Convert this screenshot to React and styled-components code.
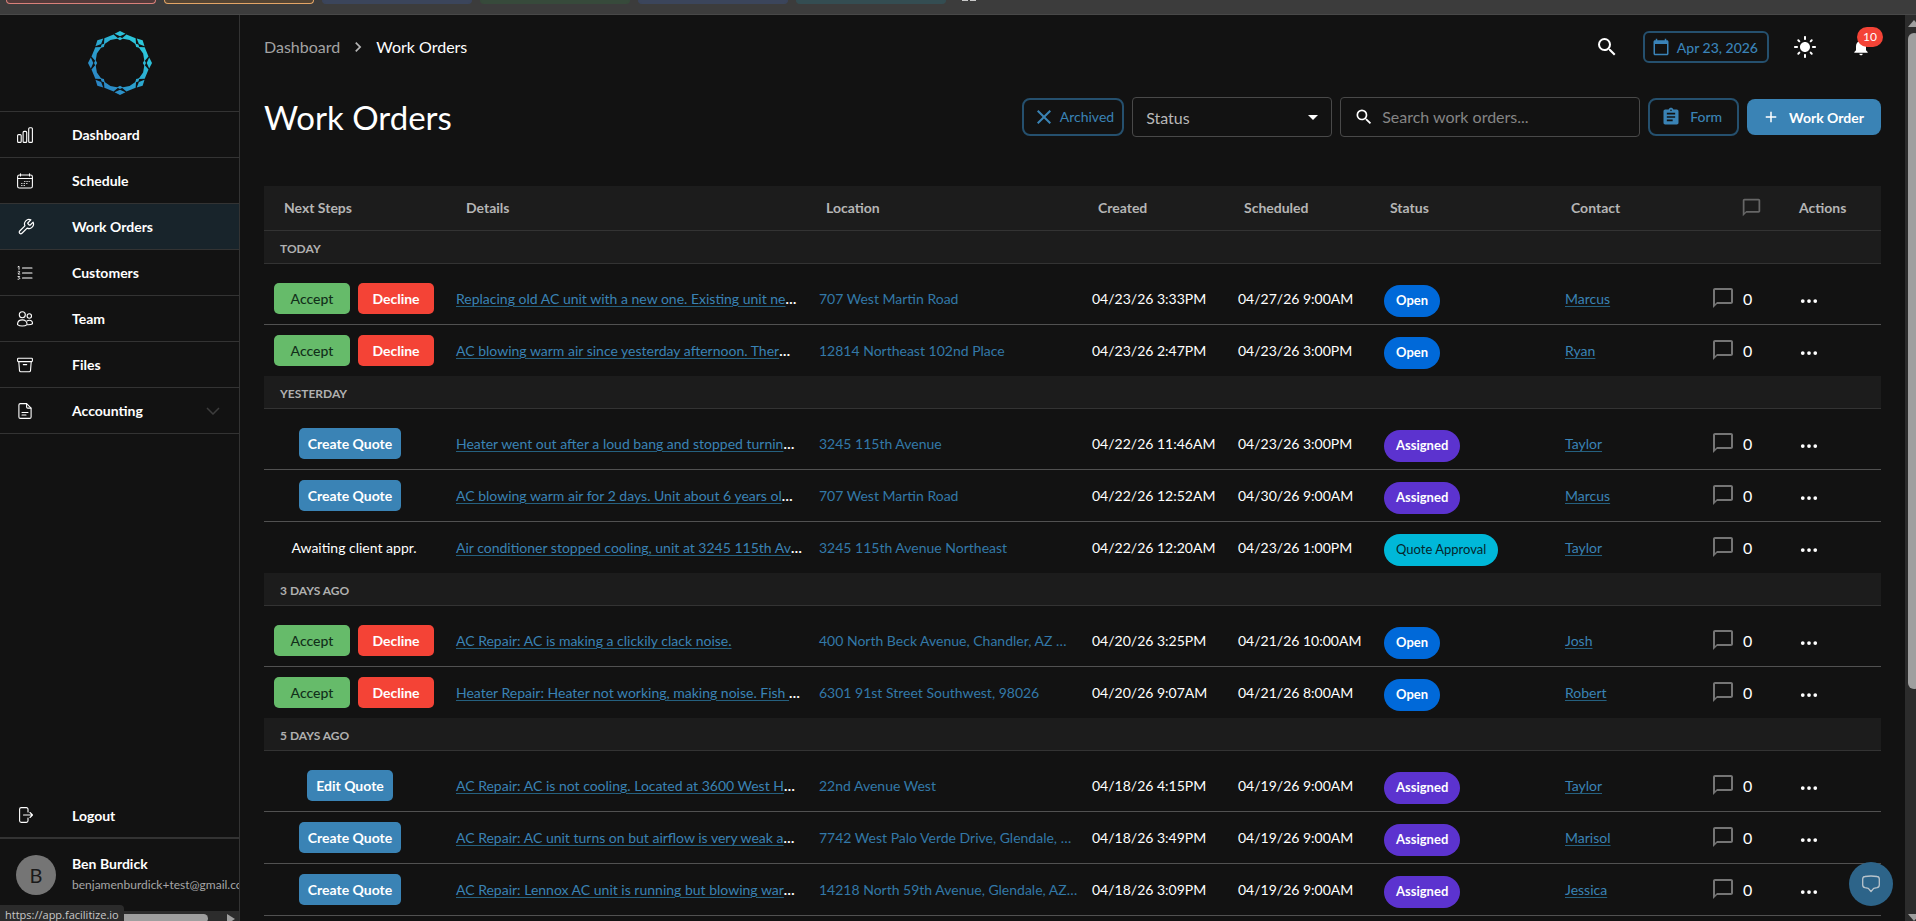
import React from "react";
import styled, { createGlobalStyle } from "styled-components";
import {
  MdSearch,
  MdLightMode,
  MdNotifications,
  MdCalendarToday,
  MdAssignment,
  MdAdd,
  MdClose,
  MdChevronRight,
  MdArrowDropDown,
  MdOutlineChatBubbleOutline,
} from "react-icons/md";
import { BsThreeDots } from "react-icons/bs";
import { LuWrench } from "react-icons/lu";

// Icons

const LineIcon = ({ children, size = 16 }) => (
  <svg
    width={size}
    height={size}
    viewBox="0 0 16 16"
    fill="none"
    stroke="currentColor"
    strokeWidth="1.1"
    strokeLinecap="round"
    strokeLinejoin="round"
    aria-hidden="true"
  >
    {children}
  </svg>
);

const BarsIcon = () => (
  <LineIcon>
    <rect x="0.6" y="7.6" width="3.6" height="7.8" rx="1" />
    <rect x="6.1" y="4.4" width="3.6" height="11" rx="1" />
    <rect x="11.7" y="0.8" width="3.7" height="14.6" rx="1" />
  </LineIcon>
);

const CalendarIcon = () => (
  <LineIcon>
    <rect x="0.6" y="2" width="14.8" height="13" rx="1.8" />
    <path d="M0.8 5.5h14.4M3.5 0.8V3M12.5 0.8V3" />
    <path
      strokeWidth="0.8"
      d="M7.500 8.5h.6M9.800 8.5h.6M12 8.5h.4M4.500 10.500h.6M7 10.500h.6M9.500 10.500h.6M4.500 12.500h.6M7 12.500h.6"
    />
  </LineIcon>
);

const ListIcon = () => (
  <LineIcon>
    <path d="M5.500 3h9.500M5.500 8h9.500M5.500 13h9.500" />
    <path
      strokeWidth="0.9"
      d="M1 1.800L2 1.200V4.300M1 6.600c.4-.5 1.700-.5 1.700.3 0 .7-1.700 1.400-1.700 2.100h1.800M1 11.500h1.600L1.800 12.700c1.400 0 1.300 1.900-.8 1.600"
    />
  </LineIcon>
);

const TeamIcon = () => (
  <LineIcon>
    <circle cx="5.3" cy="3.7" r="3" />
    <circle cx="12.3" cy="5" r="2.2" />
    <path d="M.5 13.6c0-3 2-4.7 4.8-4.7s4.8 1.7 4.8 4.7c-1.200.9-3 1.400-4.800 1.400s-3.600-.5-4.800-1.400z" />
    <path d="M10 9.900c.7-.4 1.500-.6 2.300-.6 1.900 0 3.200 1.200 3.200 3.400-.9.700-2.600 1.100-4.800 1" />
  </LineIcon>
);

const FilesIcon = () => (
  <LineIcon>
    <rect x="0.6" y="1.200" width="14.8" height="3.400" rx="0.8" />
    <path d="M1.800 4.800l.7 8.800c.1.700.6 1.200 1.300 1.200h8.400c.7 0 1.200-.5 1.300-1.200l.7-8.800M6.300 7.600h3.400" />
  </LineIcon>
);

const DocumentIcon = () => (
  <LineIcon>
    <path d="M9.600.6H3.400C2.500.6 1.900 1.200 1.900 2v12c0 .8.600 1.400 1.500 1.400h9.200c.8 0 1.500-.6 1.500-1.400V5.100z" />
    <path d="M9.600.8v3.200c0 .6.500 1.100 1.100 1.100h3.200M5 9.500h6M5 12h4" />
  </LineIcon>
);

const LogoutIcon = () => (
  <LineIcon>
    <path d="M11 5V2.200C11 1.300 10.300.6 9.400.6H4.200c-.9 0-1.600.7-1.600 1.600v11.600c0 .9.700 1.600 1.600 1.600h5.200c.9 0 1.600-.7 1.600-1.600V11" />
    <path d="M6.500 8h9M13 5.500L15.500 8 13 10.500" />
  </LineIcon>
);

const ChatIcon = () => (
  <svg
    width="20"
    height="20"
    viewBox="0 0 20 20"
    fill="none"
    stroke="currentColor"
    strokeWidth="1.300"
    strokeLinejoin="round"
    aria-hidden="true"
  >
    <path d="M4 2.500Q10 1.500 16 2.500Q18.300 2.800 18.300 5V11Q18.300 13.200 16 13.700L12.700 14.300L10 17.500L7.300 14.300L4 13.700Q1.700 13.200 1.700 11V5Q1.700 2.800 4 2.500Z" />
  </svg>
);

const Logo = () => {
  const angles = [0, 45, 90, 135, 180, 225, 270, 315];
  return (
    <svg width="64" height="64" viewBox="-32 -32 64 64" aria-label="Facilitize">
      <defs>
        <linearGradient
          id="ring"
          gradientUnits="userSpaceOnUse"
          x1="-22"
          y1="22"
          x2="22"
          y2="-22"
        >
          <stop offset="0" stopColor="#2b84c4" />
          <stop offset="1" stopColor="#2ccbdc" />
        </linearGradient>
        <mask
          id="gems"
          maskUnits="userSpaceOnUse"
          x="-32"
          y="-32"
          width="64"
          height="64"
        >
          {angles.map((a) => (
            <g key={a} transform={`rotate(${a})`} fill="#fff">
              <path d="M0-32L5.500-29.200L0-26.700L-5.500-29.200Z" />
              <path d="M0-26L3-24.500L0-22.800L-3-24.500Z" />
              <path
                transform="rotate(22.5)"
                d="M-7.800-23.200L-5-28.800L5-28.800L7.800-23.200L0-25Z"
              />
            </g>
          ))}
        </mask>
      </defs>
      <rect x="-32" y="-32" width="64" height="64" fill="url(#ring)" mask="url(#gems)" />
    </svg>
  );
};

// Data

const navItems = [
  { label: "Dashboard", icon: <BarsIcon /> },
  { label: "Schedule", icon: <CalendarIcon /> },
  { label: "Work Orders", icon: <LuWrench size={18} strokeWidth={1.6} />, active: true },
  { label: "Customers", icon: <ListIcon /> },
  { label: "Team", icon: <TeamIcon /> },
  { label: "Files", icon: <FilesIcon /> },
  { label: "Accounting", icon: <DocumentIcon />, expandable: true },
];

const groups = [
  {
    title: "Today",
    orders: [
      {
        step: "respond",
        details: "Replacing old AC unit with a new one. Existing unit ne",
        cut: true,
        location: "707 West Martin Road",
        created: "04/23/26 3:33PM",
        scheduled: "04/27/26 9:00AM",
        status: "Open",
        contact: "Marcus",
      },
      {
        step: "respond",
        details: "AC blowing warm air since yesterday afternoon. Ther",
        cut: true,
        location: "12814 Northeast 102nd Place",
        created: "04/23/26 2:47PM",
        scheduled: "04/23/26 3:00PM",
        status: "Open",
        contact: "Ryan",
      },
    ],
  },
  {
    title: "Yesterday",
    orders: [
      {
        step: "create",
        details: "Heater went out after a loud bang and stopped turnin",
        cut: true,
        location: "3245 115th Avenue",
        created: "04/22/26 11:46AM",
        scheduled: "04/23/26 3:00PM",
        status: "Assigned",
        contact: "Taylor",
      },
      {
        step: "create",
        details: "AC blowing warm air for 2 days. Unit about 6 years ol",
        cut: true,
        location: "707 West Martin Road",
        created: "04/22/26 12:52AM",
        scheduled: "04/30/26 9:00AM",
        status: "Assigned",
        contact: "Marcus",
      },
      {
        step: "awaiting",
        details: "Air conditioner stopped cooling, unit at 3245 115th Av",
        cut: true,
        location: "3245 115th Avenue Northeast",
        created: "04/22/26 12:20AM",
        scheduled: "04/23/26 1:00PM",
        status: "Quote Approval",
        contact: "Taylor",
      },
    ],
  },
  {
    title: "3 days ago",
    orders: [
      {
        step: "respond",
        details: "AC Repair: AC is making a clickily clack noise.",
        location: "400 North Beck Avenue, Chandler, AZ …",
        created: "04/20/26 3:25PM",
        scheduled: "04/21/26 10:00AM",
        status: "Open",
        contact: "Josh",
      },
      {
        step: "respond",
        details: "Heater Repair: Heater not working, making noise. Fish ",
        cut: true,
        location: "6301 91st Street Southwest, 98026",
        created: "04/20/26 9:07AM",
        scheduled: "04/21/26 8:00AM",
        status: "Open",
        contact: "Robert",
      },
    ],
  },
  {
    title: "5 days ago",
    orders: [
      {
        step: "edit",
        details: "AC Repair: AC is not cooling. Located at 3600 West H",
        cut: true,
        location: "22nd Avenue West",
        created: "04/18/26 4:15PM",
        scheduled: "04/19/26 9:00AM",
        status: "Assigned",
        contact: "Taylor",
      },
      {
        step: "create",
        details: "AC Repair: AC unit turns on but airflow is very weak a",
        cut: true,
        location: "7742 West Palo Verde Drive, Glendale, …",
        created: "04/18/26 3:49PM",
        scheduled: "04/19/26 9:00AM",
        status: "Assigned",
        contact: "Marisol",
      },
      {
        step: "create",
        details: "AC Repair: Lennox AC unit is running but blowing war",
        cut: true,
        location: "14218 North 59th Avenue, Glendale, AZ…",
        created: "04/18/26 3:09PM",
        scheduled: "04/19/26 9:00AM",
        status: "Assigned",
        contact: "Jessica",
      },
    ],
  },
];

const statusColors = {
  Open: { bg: "#0069d9", fg: "#fff" },
  Assigned: { bg: "#5c33cf", fg: "#fff" },
  "Quote Approval": { bg: "#00b8d9", fg: "#06262c" },
};

const tabs = [
  { bg: "#533a3a", line: "#d9807a" },
  { bg: "#544433", line: "#e3a566" },
  { bg: "#3b455b" },
  { bg: "#374a3b" },
  { bg: "#3b455b" },
  { bg: "#344d52" },
];

// Components

const NextStep = ({ step }) => {
  if (step === "respond") {
    return (
      <StepGroup>
        <StepButton $color="accept">Accept</StepButton>
        <StepButton $color="decline">Decline</StepButton>
      </StepGroup>
    );
  }
  if (step === "awaiting") {
    return <StepText>Awaiting client appr.</StepText>;
  }
  return (
    <StepGroup $center>
      <StepButton>{step === "edit" ? "Edit Quote" : "Create Quote"}</StepButton>
    </StepGroup>
  );
};

const OrderRow = ({ order }) => (
  <tr>
    <Cell $pad={10}>
      <NextStep step={order.step} />
    </Cell>
    <Cell $pad={10}>
      <DetailLink href="#order">{order.details}</DetailLink>
      {order.cut && <Ellipsis>…</Ellipsis>}
    </Cell>
    <Cell $pad={8}>
      <Address>{order.location}</Address>
    </Cell>
    <Cell>{order.created}</Cell>
    <Cell>{order.scheduled}</Cell>
    <Cell>
      <Badge $status={order.status}>{order.status}</Badge>
    </Cell>
    <Cell>
      <DetailLink href="#contact">{order.contact}</DetailLink>
    </Cell>
    <Cell>
      <Comments>
        <MdOutlineChatBubbleOutline size={24} />
        <span>0</span>
      </Comments>
    </Cell>
    <Cell>
      <MoreButton aria-label="More actions">
        <BsThreeDots size={20} />
      </MoreButton>
    </Cell>
  </tr>
);

const Sidebar = () => (
  <SidebarContainer>
    <LogoBox>
      <Logo />
    </LogoBox>
    <Nav>
      {navItems.map((item) => (
        <NavItem key={item.label} href="#nav" $active={item.active}>
          <NavIcon>{item.icon}</NavIcon>
          <NavLabel>{item.label}</NavLabel>
          {item.expandable && (
            <Expand width="14" height="8" viewBox="0 0 14 8">
              <path d="M1 1l6 6 6-6" fill="none" stroke="currentColor" strokeWidth="1.500" />
            </Expand>
          )}
        </NavItem>
      ))}
    </Nav>
    <Logout>
      <NavIcon>
        <LogoutIcon />
      </NavIcon>
      <NavLabel>Logout</NavLabel>
    </Logout>
    <User>
      <Avatar>B</Avatar>
      <UserInfo>
        <UserName>Ben Burdick</UserName>
        <UserEmail>benjamenburdick+test@gmail.com</UserEmail>
      </UserInfo>
    </User>
    <SideScroll>
      <SideThumb />
      <svg width="8" height="10" viewBox="0 0 8 10">
        <path d="M0 0l8 5-8 5z" fill="#9f9f9f" />
      </svg>
    </SideScroll>
  </SidebarContainer>
);

const App = () => (
  <>
    <GlobalStyle />
    <Page>
      <TabStrip>
        {tabs.map((tab, i) => (
          <Tab key={i} $bg={tab.bg} $line={tab.line} />
        ))}
        <TabMark />
      </TabStrip>
      <Body>
        <Sidebar />
        <Main>
          <TopBar>
            <Breadcrumbs aria-label="Breadcrumb">
              <Crumb href="#dashboard">Dashboard</Crumb>
              <MdChevronRight size={20} color="#b5b5b5" />
              <Crumb href="#orders" $current>
                Work Orders
              </Crumb>
            </Breadcrumbs>
            <TopActions>
              <IconButton aria-label="Search">
                <MdSearch size={24} />
              </IconButton>
              <DateButton>
                <MdCalendarToday size={18} />
                Apr 23, 2026
              </DateButton>
              <IconButton aria-label="Toggle theme">
                <MdLightMode size={24} />
              </IconButton>
              <IconButton aria-label="Notifications">
                <MdNotifications size={20} />
                <Count>10</Count>
              </IconButton>
            </TopActions>
          </TopBar>
          <Toolbar>
            <Title>Work Orders</Title>
            <Filters>
              <OutlineButton $tight>
                <MdClose size={24} />
                Archived
              </OutlineButton>
              <SelectBox>
                <Select aria-label="Status" defaultValue="">
                  <option value="">Status</option>
                  <option>Open</option>
                  <option>Assigned</option>
                  <option>Quote Approval</option>
                </Select>
                <SelectArrow size={24} />
              </SelectBox>
              <SearchBox>
                <MdSearch size={20} />
                <SearchInput
                  type="text"
                  aria-label="Search work orders"
                  placeholder="Search work orders..."
                />
              </SearchBox>
              <OutlineButton>
                <MdAssignment size={20} />
                <ButtonText>Form</ButtonText>
              </OutlineButton>
              <PrimaryButton>
                <MdAdd size={18} />
                Work Order
              </PrimaryButton>
            </Filters>
          </Toolbar>
          <Table>
            <colgroup>
              <Col $w={182} />
              <Col $w={365} />
              <Col $w={277} />
              <Col $w={146} />
              <Col $w={146} />
              <Col $w={181} />
              <Col $w={148} />
              <Col $w={86} />
              <Col $w={86} />
            </colgroup>
            <thead>
              <tr>
                <HeadCell $pad={20}>Next Steps</HeadCell>
                <HeadCell $pad={20}>Details</HeadCell>
                <HeadCell $pad={15}>Location</HeadCell>
                <HeadCell>Created</HeadCell>
                <HeadCell>Scheduled</HeadCell>
                <HeadCell>Status</HeadCell>
                <HeadCell>Contact</HeadCell>
                <HeadCell $center aria-label="Comments">
                  <MdOutlineChatBubbleOutline size={21} color="#666" />
                </HeadCell>
                <HeadCell $pad={4}>Actions</HeadCell>
              </tr>
            </thead>
            {groups.map((group) => (
              <Group key={group.title}>
                <tr>
                  <GroupCell colSpan={9}>{group.title}</GroupCell>
                </tr>
                {group.orders.map((order) => (
                  <OrderRow key={order.created} order={order} />
                ))}
              </Group>
            ))}
          </Table>
        </Main>
        <PageScroll>
          <ScrollArrow viewBox="0 0 12 7">
            <path d="M0 7l6-7 6 7z" />
          </ScrollArrow>
          <PageThumb />
          <ScrollRest />
          <ScrollArrow viewBox="0 0 12 7">
            <path d="M0 0l6 7 6-7z" />
          </ScrollArrow>
        </PageScroll>
      </Body>
      <ChatButton aria-label="Open chat">
        <ChatIcon />
      </ChatButton>
      <StatusTip>https://app.facilitize.io</StatusTip>
    </Page>
  </>
);

export default App;

// Styles

const GlobalStyle = createGlobalStyle`
  * {
    box-sizing: border-box;
  }
  body {
    margin: 0;
    background: #121212;
    color: #fff;
    font-family: Lato, "Liberation Sans", sans-serif;
    font-size: 14px;
  }
  button, input, select {
    font-family: inherit;
  }
  svg {
    display: block;
    flex-shrink: 0;
  }
`;

const Page = styled.div`
  position: relative;
  height: 100vh;
  display: flex;
  flex-direction: column;
  overflow: hidden;
`;

const TabStrip = styled.div`
  flex: none;
  display: flex;
  gap: 8px;
  height: 15px;
  padding: 0 6px;
  background: #3c3c3c;
  border-bottom: 1px solid #484848;
`;

const Tab = styled.div`
  width: 150px;
  height: 4px;
  background: ${({ $bg }) => $bg};
  border: 1px solid ${({ $line, $bg }) => $line || $bg};
  border-top: none;
  border-radius: 0 0 5px 5px;
`;

const TabMark = styled.div`
  width: 14px;
  height: 1px;
  margin-left: 8px;
  border: solid #c9c9c9;
  border-width: 0 6px;
`;

const Body = styled.div`
  flex: 1;
  min-height: 0;
  display: flex;
`;

const SidebarContainer = styled.aside`
  flex: none;
  width: 240px;
  display: flex;
  flex-direction: column;
  border-right: 1px solid #333;
  overflow: hidden;
`;

const LogoBox = styled.div`
  display: flex;
  justify-content: center;
  padding: 16px 0;
  border-bottom: 1px solid #333;
`;

const Nav = styled.nav`
  flex: 1;
  display: flex;
  flex-direction: column;
`;

const NavItem = styled.a`
  display: flex;
  align-items: center;
  height: 46px;
  padding: 0 19px 0 17px;
  color: #fff;
  text-decoration: none;
  border-bottom: 1px solid #333;
  background: ${({ $active }) => ($active ? "#18242b" : "transparent")};
`;

const NavIcon = styled.span`
  width: 55px;
`;

const NavLabel = styled.span`
  flex: 1;
  text-align: left;
  font-size: 14px;
  font-weight: 700;
`;

const Expand = styled.svg`
  color: #3d3d3d;
`;

const Logout = styled.button`
  display: flex;
  align-items: center;
  height: 46px;
  padding: 0 17px;
  background: none;
  border: none;
  border-bottom: 2px solid #333;
  color: #fff;
`;

const User = styled.div`
  display: flex;
  align-items: center;
  gap: 16px;
  height: 72px;
  padding: 0 0 0 16px;
`;

const Avatar = styled.div`
  flex: none;
  display: flex;
  align-items: center;
  justify-content: center;
  width: 40px;
  height: 40px;
  border-radius: 50%;
  background: #757575;
  color: #1a1a1a;
  font-size: 20px;
`;

const UserInfo = styled.div`
  display: flex;
  flex-direction: column;
  gap: 4px;
  padding-bottom: 3px;
  white-space: nowrap;
`;

const UserName = styled.span`
  font-weight: 700;
  line-height: 18px;
`;

const UserEmail = styled.span`
  color: #a6a6a6;
  font-size: 12px;
  line-height: 16px;
`;

const SideScroll = styled.div`
  display: flex;
  gap: 19px;
  height: 10px;
  padding: 3px 4px 0 16px;
  background: #2c2c2c;
  overflow: hidden;
`;

const SideThumb = styled.div`
  flex: 1;
  height: 9px;
  border-radius: 5px;
  background: #9f9f9f;
`;

const Main = styled.main`
  flex: 1;
  min-width: 0;
  padding: 16px 24px 0;
  overflow: hidden;
`;

const TopBar = styled.header`
  display: flex;
  align-items: center;
  justify-content: space-between;
  height: 32px;
`;

const Breadcrumbs = styled.nav`
  display: flex;
  align-items: center;
  gap: 8px;
`;

const Crumb = styled.a`
  padding-bottom: 2px;
  font-size: 16px;
  text-decoration: none;
  color: ${({ $current }) => ($current ? "#fff" : "#a3a3a3")};
`;

const TopActions = styled.div`
  display: flex;
  align-items: center;
  gap: 16px;
`;

const IconButton = styled.button`
  position: relative;
  display: flex;
  align-items: center;
  justify-content: center;
  width: 40px;
  height: 40px;
  padding: 0;
  background: none;
  border: none;
  color: #fff;
`;

const Count = styled.span`
  position: absolute;
  top: 0;
  right: -2px;
  height: 20px;
  padding: 0 6px;
  border-radius: 10px;
  background: #f44336;
  font-size: 12px;
  line-height: 20px;
`;

const DateButton = styled.button`
  display: flex;
  align-items: center;
  gap: 7px;
  height: 32px;
  padding: 0 9px 0 7px;
  background: none;
  border: 2px solid #25506e;
  border-radius: 6px;
  color: #3a83b8;
  font-size: 14px;
  font-weight: 500;
`;

const Toolbar = styled.div`
  display: flex;
  align-items: center;
  justify-content: space-between;
  height: 40px;
  margin-top: 34px;
`;

const Title = styled.h1`
  margin: 0;
  font-size: 33px;
  font-weight: 400;
  line-height: 40px;
`;

const Filters = styled.div`
  display: flex;
  align-items: center;
  gap: 8px;
`;

const OutlineButton = styled.button`
  display: flex;
  align-items: center;
  gap: ${({ $tight }) => ($tight ? "4px" : "9px")};
  height: 38px;
  padding: ${({ $tight }) => ($tight ? "0 8px 0 8px" : "0 15px 0 11px")};
  background: none;
  border: 2px solid #25506e;
  border-radius: 8px;
  color: #3a83b5;
  font-size: 14px;
  line-height: 16px;
`;

const ButtonText = styled.span`
  font-weight: 500;
`;

const SelectBox = styled.div`
  position: relative;
  width: 200px;
`;

const Select = styled.select`
  appearance: none;
  width: 100%;
  height: 40px;
  padding: 0 32px 0 13px;
  background: transparent;
  border: 1px solid #494949;
  border-radius: 4px;
  color: #b8b8b8;
  font-size: 16px;
`;

const SelectArrow = styled(MdArrowDropDown)`
  position: absolute;
  top: 8px;
  right: 7px;
  pointer-events: none;
`;

const SearchBox = styled.div`
  display: flex;
  align-items: center;
  gap: 8px;
  width: 300px;
  height: 40px;
  padding: 0 12px 0 13px;
  border: 1px solid #494949;
  border-radius: 4px;
`;

const SearchInput = styled.input`
  flex: 1;
  min-width: 0;
  padding: 0 0 2px;
  background: none;
  border: none;
  outline: none;
  color: #fff;
  font-size: 16px;

  &::placeholder {
    color: #858585;
  }
`;

const PrimaryButton = styled.button`
  display: flex;
  align-items: center;
  gap: 9px;
  height: 36px;
  padding: 0 17px 0 15px;
  background: #3a83b5;
  border: none;
  border-radius: 8px;
  color: #fff;
  font-size: 14px;
  font-weight: 700;
`;

const Table = styled.table`
  width: 100%;
  margin-top: 49px;
  table-layout: fixed;
  border-collapse: separate;
  border-spacing: 0;
`;

const Col = styled.col`
  width: ${({ $w }) => $w}px;
`;

const HeadCell = styled.th`
  height: 45px;
  padding: 0 4px 2px ${({ $pad = 10, $center }) => ($center ? 2 : $pad)}px;
  background: #1c1c1c;
  border-bottom: 1px solid #333;
  color: #b5b5b5;
  font-size: 14px;
  font-weight: 700;
  text-align: left;

  svg {
    margin: 0 auto;
  }
`;

const GroupCell = styled.td`
  height: 33px;
  padding: 3px 16px 0;
  background: #1c1c1c;
  border-bottom: 1px solid #333;
  color: #b0b0b0;
  font-size: 12px;
  font-weight: 700;
  text-transform: uppercase;
`;

const Cell = styled.td`
  height: 52px;
  padding: 0 0 0 ${({ $pad = 4 }) => $pad}px;
  border-bottom: 1px solid #515151;
  white-space: nowrap;
`;

const Group = styled.tbody`
  tr:nth-child(2) > td {
    height: 61px;
    padding-top: 9px;
  }

  &:not(:last-child) > tr:last-child > td {
    height: 51px;
    border-bottom: none;
  }
`;

const StepGroup = styled.div`
  display: flex;
  gap: 8px;
  padding-right: 20px;
  justify-content: ${({ $center }) => ($center ? "center" : "flex-start")};
`;

const stepColors = {
  accept: { bg: "#66bb6a", fg: "#12301a", weight: 500, width: 76 },
  decline: { bg: "#f44336", fg: "#fff", weight: 700, width: 76 },
  quote: { bg: "#3a83b5", fg: "#fff", weight: 700, width: 84 },
};

const StepButton = styled.button`
  flex: none;
  height: 31px;
  min-width: ${({ $color = "quote" }) => stepColors[$color].width}px;
  padding: 0 9px 1px;
  background: ${({ $color = "quote" }) => stepColors[$color].bg};
  border: none;
  border-radius: 5px;
  color: ${({ $color = "quote" }) => stepColors[$color].fg};
  font-size: 14px;
  font-weight: ${({ $color = "quote" }) => stepColors[$color].weight};
`;

const StepText = styled.div`
  padding-right: 12px;
  text-align: center;
`;

const DetailLink = styled.a`
  color: #3a83b5;
  text-decoration: underline;
  text-decoration-color: #25607f;
  text-underline-offset: 2px;
  white-space: pre;
`;

const Ellipsis = styled.span`
  font-weight: 700;
`;

const Address = styled.span`
  color: #3379a8;
`;

const Badge = styled.span`
  display: inline-block;
  height: 32px;
  margin-top: 4px;
  padding: 0 12px;
  border-radius: 16px;
  background: ${({ $status }) => statusColors[$status].bg};
  color: ${({ $status }) => statusColors[$status].fg};
  font-size: 13px;
  font-weight: ${({ $status }) => ($status === "Quote Approval" ? 400 : 700)};
  line-height: 30px;
`;

const Comments = styled.div`
  display: flex;
  align-items: center;
  gap: 8px;
  margin-left: -2px;
  padding-bottom: 1px;
  font-size: 16px;

  svg {
    color: #757575;
  }
`;

const MoreButton = styled.button`
  display: flex;
  margin-top: 4px;
  padding: 0;
  background: none;
  border: none;
  color: #fff;
`;

const PageScroll = styled.div`
  flex: none;
  display: flex;
  flex-direction: column;
  width: 11px;
  padding: 5px 0 0 3px;
  background: #2c2c2c;
  overflow: hidden;
`;

const ScrollArrow = styled.svg`
  width: 12px;
  height: 7px;
  fill: #9f9f9f;
`;

const PageThumb = styled.div`
  flex: 657;
  width: 12px;
  margin-top: 6px;
  border-radius: 6px;
  background: #9f9f9f;
`;

const ScrollRest = styled.div`
  flex: 225;
`;

const ChatButton = styled.button`
  position: absolute;
  right: 23px;
  bottom: 15px;
  display: flex;
  align-items: center;
  justify-content: center;
  width: 44px;
  height: 44px;
  padding: 0;
  border: none;
  border-radius: 50%;
  background: #2d6489;
  color: #b9c4cc;
`;

const StatusTip = styled.div`
  position: absolute;
  left: 0;
  bottom: 0;
  height: 16px;
  padding: 0 5px;
  border-radius: 0 4px 0 0;
  background: #2b2b2b;
  color: #c8c8c8;
  font-family: "Open Sans", sans-serif;
  font-size: 11px;
  line-height: 20px;
  overflow: hidden;
`;
